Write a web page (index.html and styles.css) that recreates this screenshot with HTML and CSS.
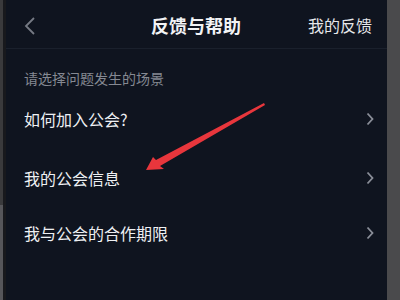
FILE: index.html
```html
<!DOCTYPE html>
<html lang="zh">
<head>
<meta charset="utf-8">
<link rel="stylesheet" href="styles.css">
</head>
<body>
<div class="frame">
  <div class="edge-left"><div class="edge-top"></div><div class="edge-bottom"></div></div>
  <div class="edge-dark"></div>
  <main class="panel">
    <header class="nav">
      <svg class="back" width="12" height="18" viewBox="0 0 12 18"><path d="M10 1 L2 9 L10 17" fill="none" stroke="#767a84" stroke-width="1.8"/></svg>
      <h1 class="title">反馈与帮助</h1>
      <span class="action">我的反馈</span>
    </header>
    <div class="label">请选择问题发生的场景</div>
    <ul class="list">
      <li class="row"><span>如何加入公会?</span><svg class="chev" width="8" height="14" viewBox="0 0 8 14"><path d="M1.5 1.5 L6.5 7 L1.5 12.5" fill="none" stroke="#8a8e98" stroke-width="1.8"/></svg></li>
      <li class="row"><span>我的公会信息</span><svg class="chev" width="8" height="14" viewBox="0 0 8 14"><path d="M1.5 1.5 L6.5 7 L1.5 12.5" fill="none" stroke="#8a8e98" stroke-width="1.8"/></svg></li>
      <li class="row"><span>我与公会的合作期限</span><svg class="chev" width="8" height="14" viewBox="0 0 8 14"><path d="M1.5 1.5 L6.5 7 L1.5 12.5" fill="none" stroke="#8a8e98" stroke-width="1.8"/></svg></li>
    </ul>
    <svg class="arrow" width="400" height="300" viewBox="0 0 400 300">
      <polygon points="264,103 265,105 160,166 164,169 146,170 153,157 156,160" fill="#e8363c"/>
    </svg>
  </main>
  <div class="edge-right"></div>
</div>
</body>
</html>
```
FILE: styles.css
```css
html, body {
  margin: 0;
  padding: 0;
  background: #0f141f;
}
.frame {
  display: flex;
  width: 400px;
  height: 300px;
  overflow: hidden;
  font-family: "Noto Sans CJK SC", "Noto Sans", sans-serif;
}
.edge-left {
  width: 3px;
  display: flex;
  flex-direction: column;
}
.edge-top {
  height: 205px;
  background: #3a3a3c;
}
.edge-bottom {
  flex: 1;
  background: #56565a;
}
.edge-dark {
  width: 3px;
  background: #18191d;
}
.panel {
  position: relative;
  flex: 1;
  background: #0f141f;
}
.edge-right {
  width: 13px;
  background: #4a4a4c;
}
.nav {
  height: 48px;
  border-bottom: 1px solid #1a202c;
  display: flex;
  align-items: center;
  position: relative;
}
.back {
  margin-left: 18px;
  margin-top: 4px;
}
.title {
  position: absolute;
  left: 0;
  right: 0;
  top: 0;
  margin: 0;
  text-align: center;
  line-height: 50px;
  font-size: 18px;
  font-weight: 700;
  color: #f2f3f5;
  pointer-events: none;
  margin-left: -1px;
}
.action {
  margin-left: auto;
  margin-right: 15px;
  font-size: 16px;
  color: #e6e7ea;
  margin-top: 2px;
}
.label {
  padding: 19px 0 0 18px;
  font-size: 14px;
  line-height: 20px;
  color: #858992;
}
.list {
  list-style: none;
  margin: 0;
  padding: 8px 0 0 0;
}
.row {
  display: flex;
  align-items: center;
  justify-content: space-between;
  padding: 0 13px 0 18px;
  font-size: 16px;
  color: #eef0f3;
}
.row:nth-child(1) {
  height: 46px;
  margin-bottom: 8px;
}
.row:nth-child(2) {
  height: 55px;
}
.row:nth-child(3) {
  height: 56px;
}
.chev {
  display: block;
}
.arrow {
  position: absolute;
  left: -6px;
  top: 0;
  pointer-events: none;
}
```
